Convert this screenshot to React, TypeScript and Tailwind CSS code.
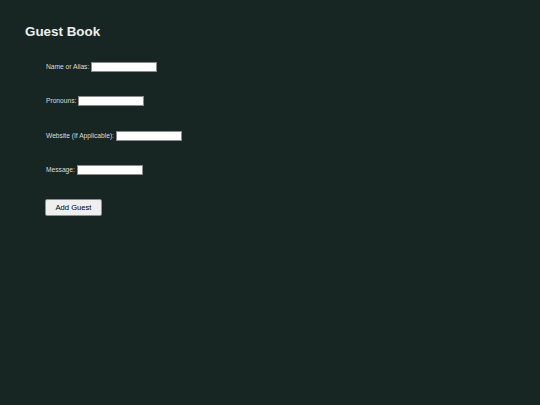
import React from "react";

const rows = [
  { label: "Name or Alias:" },
  { label: "Pronouns:" },
  { label: "Website (If Applicable):" },
  { label: "Message:" },
];

export default function App() {
  return (
    <div
      className="w-[540px] h-[405px] bg-[#172622] text-[#e6e6e6] overflow-hidden"
      style={{ fontFamily: '"Liberation Sans", Arial, sans-serif' }}
    >
      <div className="pl-[25px] pt-[24px]">
        <h1 className="text-[13.4px] font-bold leading-[16px] text-[#eeeeee]">Guest Book</h1>
      </div>
      <div className="pl-[46px] pt-[22px] flex flex-col gap-[24.3px]">
        {rows.map((r) => (
          <div key={r.label} className="flex items-center h-[10px] text-[6.67px] text-[#dcdcdc]">
            <span className="leading-[10px]">{r.label}</span>
            <span className="ml-[2px] inline-block w-[66px] h-[10px] bg-white border border-[#8a8a8a]" />
          </div>
        ))}
        <div className="-ml-[1px] flex">
          <button className="w-[57px] h-[17px] rounded-[2px] bg-[#efefef] border border-[#8f8f8f] text-[7.6px] text-black leading-none">
            Add Guest
          </button>
        </div>
      </div>
    </div>
  );
}
